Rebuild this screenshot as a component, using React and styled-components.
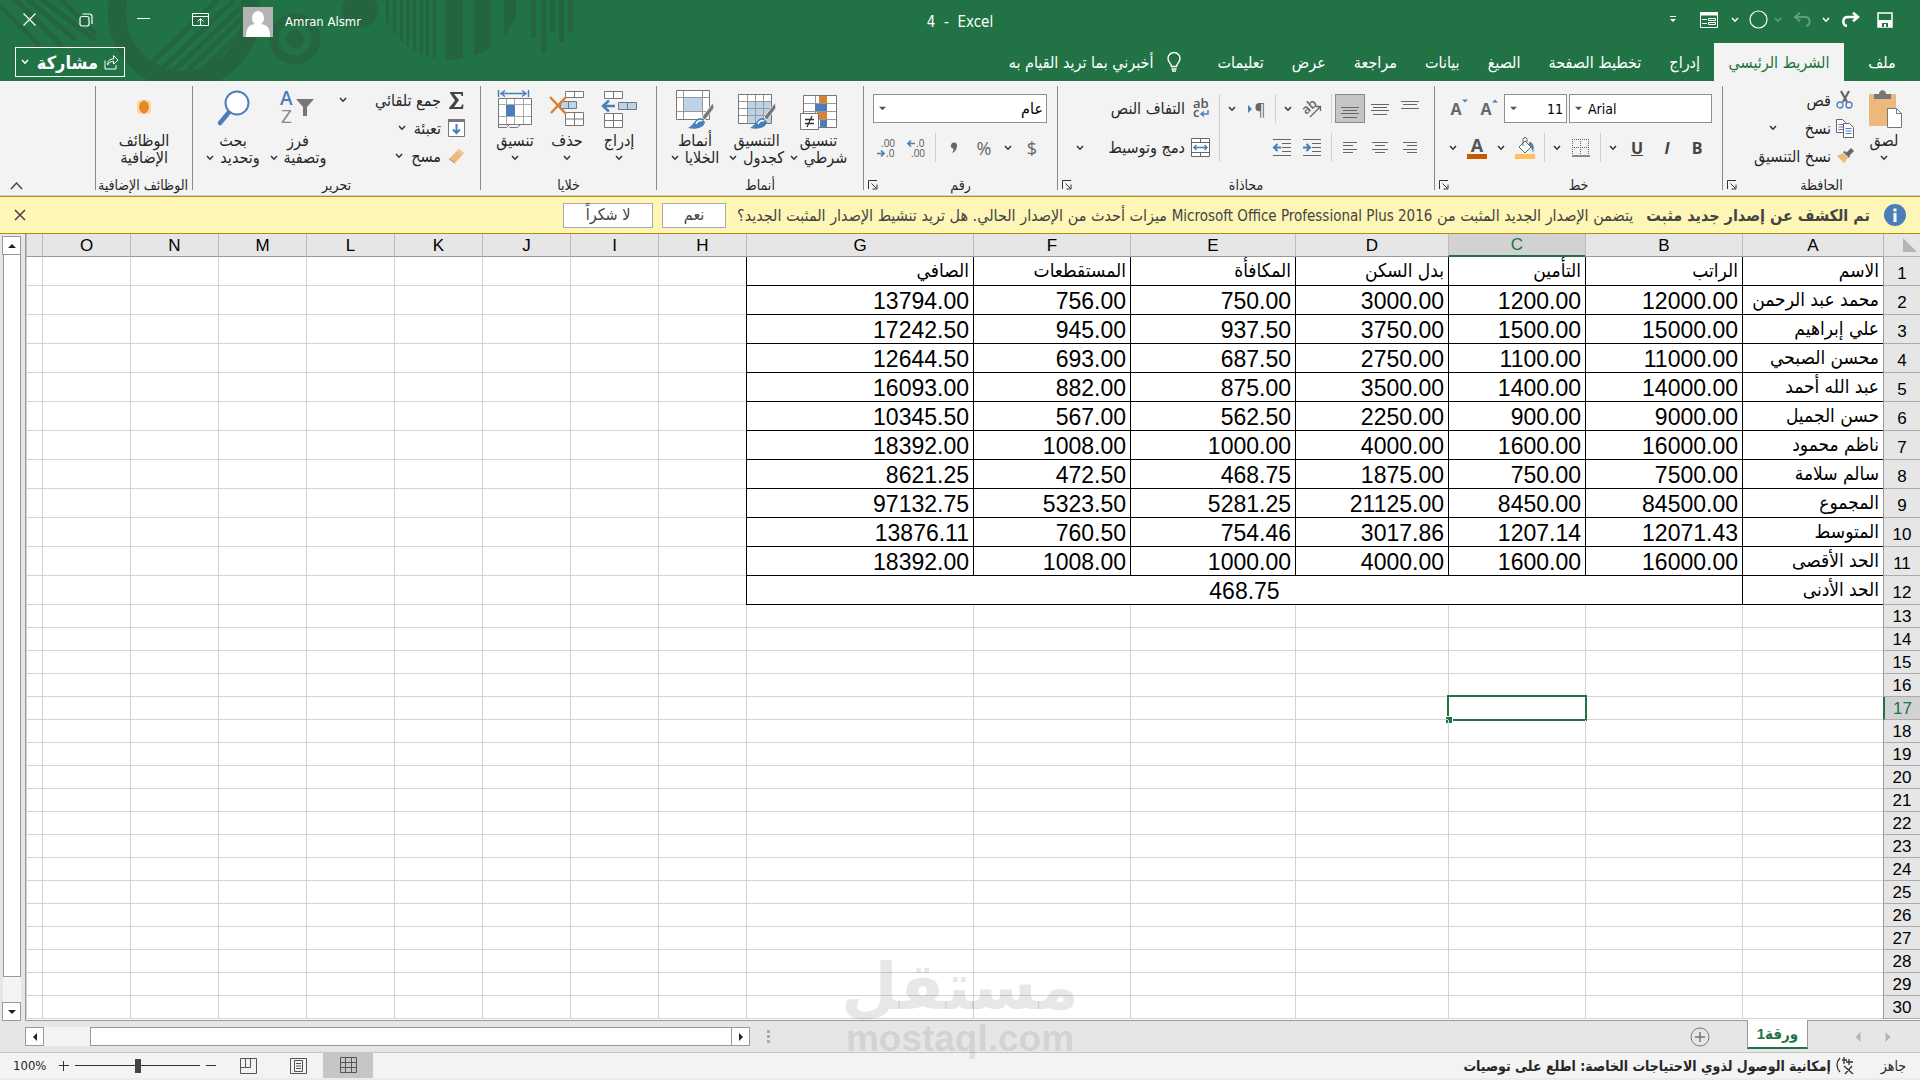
import React from "react";
import styled, { createGlobalStyle } from "styled-components";

const UI = `"DejaVu Sans Condensed", "DejaVu Sans", sans-serif`;
const GREEN = "#217346";

const Global = createGlobalStyle`
  * { box-sizing: border-box; }
  body { margin: 0; background: #e6e6e6; font-family: ${UI}; font-size: 16px; color: #262626; overflow: hidden; }
  button, select, input { font: inherit; color: inherit; margin: 0; }
  svg { display: block; flex: none; overflow: visible; direction: ltr; }
`;

const Window = styled.div`
  height: 100vh;
  display: flex;
  flex-direction: column;
  position: relative;
  overflow: hidden;
`;

/* ---------- Title bar and tabs ---------- */
const Header = styled.header`
  background: ${GREEN};
  color: #fff;
  position: relative;
`;
const Pattern = styled.svg`
  position: absolute;
  left: 0;
  top: 0;
  && { overflow: hidden; }
`;
const TitleBar = styled.div`
  height: 43px;
  display: grid;
  grid-template-columns: 1fr auto 1fr;
  align-items: center;
  position: relative;
`;
const QuickAccess = styled.div`
  display: flex;
  align-items: center;
  padding-right: 20px;
  padding-bottom: 4px;
`;
const WindowControls = styled.div`
  display: flex;
  justify-content: flex-end;
  align-items: center;
`;
const Plain = styled.button`
  border: 0;
  padding: 0;
  background: transparent;
  display: flex;
  align-items: center;
  justify-content: center;
  width: ${(p) => p.$w || 30}px;
  height: ${(p) => p.$h || 30}px;
  opacity: ${(p) => (p.$dim ? 0.3 : 1)};
`;
const ControlButton = styled(Plain)`
  padding-bottom: 4px;
`;
const DocName = styled.div`
  font-size: 15px;
  line-height: 20px;
  white-space: pre;
`;
const Account = styled.button`
  border: 0;
  padding: 0;
  background: transparent;
  display: flex;
  align-items: center;
  gap: 12px;
  font-size: 13px;
  margin-left: 15px;
  direction: ltr;
`;
const TabRow = styled.nav`
  display: flex;
  height: 38px;
  position: relative;
`;
const Tab = styled.button`
  border: 0;
  padding: 0 14px;
  background: ${(p) => (p.$active ? "#f3f3f3" : "transparent")};
  color: ${(p) => (p.$active ? GREEN : "#fff")};
  white-space: nowrap;
  min-width: ${(p) => (p.$active ? 130 : p.$wide ? 76 : 0)}px;
`;
const TellMe = styled.button`
  border: 0;
  padding: 0;
  margin-right: 22px;
  background: transparent;
  display: flex;
  align-items: center;
  gap: 14px;
`;
const Share = styled.button`
  margin: 4px auto 4px 15px;
  width: 110px;
  height: 30px;
  border: 1px solid #fff;
  background: transparent;
  display: flex;
  align-items: center;
  padding: 0 5px;
  font-size: 18px;
  font-weight: bold;
  gap: 6px;
  & > :last-child { margin-right: auto; }
`;

/* ---------- Ribbon ---------- */
const Ribbon = styled.section`
  background: #f3f3f3;
  border-bottom: 1px solid #d2d2d2;
  padding: 5px 0 1px;
  display: flex;
`;
const Group = styled.div`
  width: ${(p) => p.$w}px;
  flex: none;
  background: linear-gradient(#8a8a8a, #8a8a8a) left top / 1px 104px no-repeat;
  padding-left: 1px;
  display: flex;
  flex-direction: column;
  justify-content: space-between;
  min-height: 108px;
`;
const GroupBody = styled.div`
  display: flex;
  padding-right: ${(p) => p.$pr || 0}px;
  padding-top: ${(p) => p.$pt || 0}px;
  justify-content: ${(p) => (p.$center ? "center" : "flex-start")};
`;
const GroupFoot = styled.div`
  display: grid;
  grid-template-columns: 10px 1fr 10px;
  align-items: center;
  font-size: 14px;
  line-height: 18px;
  height: 18px;
  text-align: center;
  white-space: nowrap;
  margin: 0 4px;
`;
const FootLabel = styled.span`
  grid-column: ${(p) => (p.$full ? "1 / 4" : "2")};
`;
const Stack = styled.div`
  display: flex;
  flex-direction: column;
  gap: ${(p) => p.$gap || 0}px;
`;
const ToolRow = styled.div`
  display: flex;
  align-items: center;
  height: 29px;
`;
const Tool = styled.button`
  border: ${(p) => (p.$on ? "1px solid #8a8a8a" : "0")};
  background: ${(p) => (p.$on ? "#c5c5c5" : "transparent")};
  padding: 0;
  width: ${(p) => p.$w || 30}px;
  height: 29px;
  display: flex;
  align-items: center;
  justify-content: center;
  font-family: "Open Sans", sans-serif;
  font-size: ${(p) => p.$size || 16}px;
  font-weight: ${(p) => (p.$bold ? 700 : 400)};
  font-style: ${(p) => (p.$italic ? "italic" : "normal")};
  text-decoration: ${(p) => (p.$underline ? "underline" : "none")};
  color: ${(p) => p.$color || "#444"};
`;
const SizeTool = styled(Tool)`
  direction: ltr;
  & > svg { align-self: flex-start; margin-top: 4px; }
`;
const Rule = styled.span`
  width: 8px;
  align-self: stretch;
  display: flex;
  justify-content: center;
  &::before { content: ""; width: 1px; background: #d0d0d0; }
`;
const Line = styled.button`
  border: 0;
  background: transparent;
  padding: 0;
  display: flex;
  align-items: center;
  gap: ${(p) => p.$gap ?? 4}px;
  height: ${(p) => p.$h || 28}px;
  white-space: nowrap;
`;
const IconSlot = styled.span`
  width: ${(p) => p.$w || 20}px;
  display: flex;
  justify-content: center;
`;
const Arrow = styled.span`
  padding-right: ${(p) => p.$pr || 4}px;
`;
const Big = styled.button`
  border: 0;
  background: transparent;
  padding: 4px 0 0;
  width: ${(p) => p.$w || 62}px;
  display: flex;
  flex-direction: column;
  align-items: center;
  line-height: 17px;
  white-space: nowrap;
`;
const BigIcon = styled.span`
  height: 42px;
  display: flex;
  align-items: flex-start;
  justify-content: center;
`;
const BigLine = styled.span`
  display: flex;
  align-items: center;
  gap: 6px;
  height: 17px;
`;
const ComboBox = styled.div`
  direction: ltr;
  width: ${(p) => p.$w}px;
  height: 29px;
  margin-left: ${(p) => p.$ml || 0}px;
  border: 1px solid #8f8f8f;
  background: #fff;
  display: flex;
  align-items: center;
  padding: 0 3px 0 5px;
  gap: 6px;
`;
const ComboSelect = styled.select`
  appearance: none;
  border: 0;
  background: transparent;
  flex: 1;
  min-width: 0;
  padding: 0;
  font-size: ${(p) => (p.$arabic ? 16 : 14)}px;
  color: #000;
  text-align: ${(p) => p.$align};
  text-align-last: ${(p) => p.$align};
`;
const Collapse = styled.div`
  flex: 1;
  display: flex;
  align-items: flex-end;
  justify-content: flex-end;
  padding: 0 0 2px 7px;
`;

/* ---------- Message bar ---------- */
const MessageBar = styled.div`
  background: #fdf6b6;
  border-top: 1px solid #b98c0a;
  border-bottom: 1px solid #b98c0a;
  height: 38px;
  display: flex;
  align-items: center;
  padding: 0 14px 0 10px;
  color: #444;
  white-space: nowrap;
`;
const MessageTitle = styled.strong`
  margin: 0 14px 0 13px;
`;
const MessageText = styled.span`
  margin-left: 11px;
`;
const Latin = styled.bdi`
  font-size: 15px;
`;
const MessageButton = styled.button`
  width: ${(p) => p.$w}px;
  height: 25px;
  margin-left: 9px;
  padding: 0;
  border: 1px solid #ababab;
  background: #fff;
  line-height: 20px;
`;
const MessageClose = styled(Plain)`
  margin-right: auto;
`;

/* ---------- Sheet ---------- */
const SheetArea = styled.main`
  flex: 1;
  min-height: 0;
  display: flex;
`;
const Grid = styled.div`
  flex: 1;
  min-width: 0;
  overflow: hidden;
  background: #fff;
  border-left: 1px solid #999;
  border-bottom: 1px solid #999;
`;
const Table = styled.table`
  width: 100%;
  table-layout: fixed;
  border-collapse: separate;
  border-spacing: 0;
  font-family: "Liberation Sans", "DejaVu Sans Condensed", sans-serif;
  color: #000;
`;
const Corner = styled.th`
  background: #e6e6e6;
  border-left: 1px solid #b5b5b5;
  border-bottom: 1px solid #b5b5b5;
  padding: 0 3px;
`;
const ColHead = styled.th`
  height: 23px;
  padding: ${(p) => (p.$on ? 1 : 2)}px 0 0;
  font-size: 17px;
  line-height: 20px;
  font-weight: 400;
  background: ${(p) => (p.$on ? "#d2d2d2" : "#e6e6e6")};
  color: ${(p) => (p.$on ? GREEN : "#000")};
  border-left: 1px solid #bdbdbd;
  border-bottom: ${(p) => (p.$on ? `2px solid ${GREEN}` : "1px solid #999")};
`;
const RowHead = styled.th`
  padding: ${(p) => (p.$tall ? 6 : 2)}px 0 0;
  font-size: 17px;
  line-height: 20px;
  font-weight: 400;
  background: ${(p) => (p.$on ? "#d2d2d2" : "#e6e6e6")};
  color: ${(p) => (p.$on ? GREEN : "#000")};
  border-left: ${(p) => (p.$on ? `2px solid ${GREEN}` : "1px solid #999")};
  border-bottom: 1px solid #ababab;
`;
const Cell = styled.td`
  height: ${(p) => (p.$tall ? 29 : 23)}px;
  padding: ${(p) => (p.$tall && !p.$text ? 2 : 0)}px 4px 0;
  font-size: ${(p) => (p.$text ? 19 : 23)}px;
  line-height: ${(p) => (p.$tall ? 26 : 20)}px;
  white-space: nowrap;
  text-align: ${(p) => (p.$center ? "center" : "right")};
  border-left: 1px solid ${(p) => (p.$ink ? "#000" : "#d4d4d4")};
  border-bottom: 1px solid ${(p) => (p.$ink ? "#000" : "#d4d4d4")};
  position: relative;
`;
const Cursor = styled.span`
  position: absolute;
  inset: -2px;
  border: 2px solid ${GREEN};
  &::after {
    content: "";
    position: absolute;
    left: -3px;
    bottom: -4px;
    width: 6px;
    height: 6px;
    background: ${GREEN};
    border: 1px solid #fff;
    border-width: 1px 1px 0 0;
  }
`;
const VScroll = styled.div`
  width: 25px;
  padding: 2px 4px 0 3px;
  display: flex;
  flex-direction: column;
`;
const ScrollButton = styled.button`
  width: 19px;
  height: 19px;
  flex: none;
  padding: 0;
  background: #fff;
  border: 1px solid #999;
  display: flex;
  align-items: center;
  justify-content: center;
`;
const VTrack = styled.div`
  flex: 1;
  background: #f3f3f3;
  padding-bottom: 25px;
  display: flex;
`;
const VThumb = styled.div`
  flex: 1;
  background: #fff;
  border: 1px solid #999;
  border-top: 0;
`;

/* ---------- Sheet tabs ---------- */
const SheetBar = styled.div`
  height: 32px;
  border-bottom: 1px solid #c6c6c6;
  display: flex;
  align-items: center;
  padding: 0 17px 0 25px;
`;
const SheetTab = styled.button`
  align-self: flex-start;
  width: 61px;
  height: 29px;
  margin: -1px 35px 0 37px;
  padding: 0;
  background: #fff;
  border: 1px solid #999;
  border-top: 0;
  border-bottom: 2px solid ${GREEN};
  color: ${GREEN};
  font-family: "Liberation Sans", "DejaVu Sans Condensed", sans-serif;
  font-weight: bold;
  font-size: 15px;
  position: relative;
`;
const HScroll = styled.div`
  margin-right: auto;
  width: 40%;
  min-width: 300px;
  padding-right: 6px;
  display: flex;
`;
const HTrack = styled.div`
  flex: 1;
  background: #f3f3f3;
  padding-left: 46px;
  display: flex;
`;
const HThumb = styled.div`
  flex: 1;
  background: #fff;
  border: 1px solid #999;
  border-right: 0;
`;
const Dots = styled.span`
  display: grid;
  gap: 2px;
  align-content: center;
  margin-left: 17px;
  & i { width: 3px; height: 3px; background: #ababab; }
`;

/* ---------- Status bar ---------- */
const Status = styled.footer`
  height: 27px;
  background: #f3f3f3;
  border-bottom: 2px solid #ebebeb;
  display: flex;
  align-items: center;
  padding: 0 14px 0 13px;
  font-size: 14px;
  white-space: nowrap;
`;
const Access = styled.button`
  border: 0;
  background: transparent;
  padding: 0;
  margin-right: 26px;
  display: flex;
  align-items: center;
  gap: 5px;
  font-weight: bold;
`;
const View = styled.button`
  border: 0;
  padding: 0;
  align-self: stretch;
  width: 50px;
  background: ${(p) => (p.$on ? "#c6c6c6" : "transparent")};
  display: flex;
  align-items: center;
  justify-content: center;
`;
const Views = styled.div`
  margin: 0 auto 0 4px;
  align-self: stretch;
  display: flex;
`;
const Zoom = styled.input`
  appearance: none;
  width: 125px;
  height: 20px;
  && { margin: 0 3px; }
  background: linear-gradient(#333, #333) center / 100% 1px no-repeat;
  &::-webkit-slider-thumb { appearance: none; width: 6px; height: 14px; background: #444; }
`;
const Percent = styled.span`
  width: 43px;
  font-size: 13px;
  text-align: left;
  direction: ltr;
`;

const Watermark = styled.div`
  position: absolute;
  left: 0;
  right: 0;
  bottom: 19px;
  text-align: center;
  pointer-events: none;
  color: rgba(80, 85, 80, 0.14);
  font-family: "DejaVu Sans", sans-serif;
  font-weight: bold;
`;
const MarkName = styled.div`
  font-size: 65px;
  line-height: 60px;
`;
const MarkSite = styled.div`
  font-family: "Liberation Sans", sans-serif;
  font-size: 37px;
  line-height: 44px;
  direction: ltr;
`;

/* ---------- Icons ---------- */
const Chev = ({ c = "#333" }) => (
  <svg width="8" height="6" viewBox="0 0 8 6" fill="none" stroke={c} strokeWidth="1.5">
    <path d="M1 1l3 3.2L7 1" />
  </svg>
);
const Tri = ({ d = "down", c = "#222", s = 8 }) => {
  const p = { down: "M0 2h8L4 6z", up: "M0 6h8L4 2z", left: "M6 0v8L2 4z", right: "M2 0v8l4-4z" }[d];
  return <svg width={s} height={s} viewBox="0 0 8 8"><path d={p} fill={c} /></svg>;
};
const Launcher = () => (
  <svg width="10" height="10" viewBox="0 0 10 10" fill="none" stroke="#333">
    <path d="M.5 9V.5H9M3.5 3.5l5 5M9 4.5V9H4.5" />
  </svg>
);
const Lines = ({ rows, w = 20, h = 20 }) => (
  <svg width={w} height={h} viewBox={`0 0 ${w} ${h}`} stroke="#666">
    {rows.map(([x1, x2, y], i) => <path key={i} d={`M${x1} ${y + 0.5}H${x2}`} />)}
  </svg>
);
const Brush = () => (
  <g>
    <path d="M38 13 27 27l3 3 9-12z" fill="#777" stroke="#f3f3f3" strokeWidth=".8" />
    <path d="M26 28c-6 0-6 6-13 10 8 2 16 0 17-6z" fill="#4a7ebb" />
    <path d="M21 34c1-3 4-4 6-3" stroke="#fff" strokeWidth="1.5" fill="none" />
  </g>
);

const Deco = () => (
  <Pattern width="600" height="81" viewBox="0 0 600 81" fill="#24643f" stroke="none">
    <defs>
      <clipPath id="ball"><circle cx="450" cy="-12" r="72" /></clipPath>
      <clipPath id="ring"><circle cx="184" cy="13" r="60" /></clipPath>
    </defs>
    <g stroke="#24643f" strokeWidth="5">
      <path d="M-4 2 40 46M12-4 62 46M24-4 76 40M38-4 95 40M52-10 96 34" />
    </g>
    <circle cx="184" cy="13" r="67" fill="none" stroke="#24643f" strokeWidth="18" />
    <g stroke="#24643f" strokeWidth="5" clipPath="url(#ring)">
      <path d="M140 74 226-8M150 80 234 0M160 84 240 8M172 86 244 16M184 88 248 26" />
    </g>
    <circle cx="295" cy="39" r="21" fill="none" stroke="#24643f" strokeWidth="9" />
    <circle cx="295" cy="39" r="9" />
    <circle cx="360" cy="10" r="18" />
    <g clipPath="url(#ball)">
      <path d="M386 0h3v81h-3zM393 0h3v81h-3zM400 0h3v81h-3zM406 0h3v81h-3zM413 0h3v81h-3zM420 0h3v81h-3zM426 0h3v81h-3zM433 0h3v81h-3zM446 0h17v81h-17zM474 0h17v81h-17zM504 0h12v81h-12z" />
    </g>
    <path d="M531 0h5v38h-5zM541 0h5v53h-5zM550 0h5v32h-5zM559 0h5v42h-5zM568 0h5v32h-5z" />
  </Pattern>
);

const Combo = ({ label, w, ml, align, value, arabic }) => (
  <ComboBox $w={w} $ml={ml}>
    <Tri c="#555" s={7} />
    <ComboSelect aria-label={label} $align={align} $arabic={arabic} defaultValue={value}>
      <option>{value}</option>
    </ComboSelect>
  </ComboBox>
);
const Drop = ({ label }) => <Tool $w={18} aria-label={label}><Chev /></Tool>;
const Foot = ({ children, launch, full }) => (
  <GroupFoot>
    <FootLabel $full={full}>{children}</FootLabel>
    {launch && <Plain $w={10} $h={10} aria-label="خيارات"><Launcher /></Plain>}
  </GroupFoot>
);

/* ---------- Data ---------- */
const columns = [["A", 141], ["B", 157], ["C", 137], ["D", 153], ["E", 165], ["F", 157], ["G", 227],
  ["H", 88], ["I", 88], ["J", 88], ["K", 88], ["L", 88], ["M", 88], ["N", 88], ["O", 88]];
const rows = [
  ["الاسم", "الراتب", "التأمين", "بدل السكن", "المكافأة", "المستقطعات", "الصافي"],
  ["محمد عبد الرحمن", "12000.00", "1200.00", "3000.00", "750.00", "756.00", "13794.00"],
  ["علي إبراهيم", "15000.00", "1500.00", "3750.00", "937.50", "945.00", "17242.50"],
  ["محسن الصبحي", "11000.00", "1100.00", "2750.00", "687.50", "693.00", "12644.50"],
  ["عبد الله أحمد", "14000.00", "1400.00", "3500.00", "875.00", "882.00", "16093.00"],
  ["حسن الجميل", "9000.00", "900.00", "2250.00", "562.50", "567.00", "10345.50"],
  ["ناظم محمود", "16000.00", "1600.00", "4000.00", "1000.00", "1008.00", "18392.00"],
  ["سالم سلامة", "7500.00", "750.00", "1875.00", "468.75", "472.50", "8621.25"],
  ["المجموع", "84500.00", "8450.00", "21125.00", "5281.25", "5323.50", "97132.75"],
  ["المتوسط", "12071.43", "1207.14", "3017.86", "754.46", "760.50", "13876.11"],
  ["الحد الأقصى", "16000.00", "1600.00", "4000.00", "1000.00", "1008.00", "18392.00"],
];
const blanks = (from, count, tall) =>
  Array.from({ length: count }, (_, i) => <Cell key={from + i} $tall={tall} />);

const Sheet = () => (
  <Table>
    <colgroup>
      <col style={{ width: 37 }} />
      {columns.map(([n, w]) => <col key={n} style={{ width: w }} />)}
      <col />
    </colgroup>
    <thead>
      <tr>
        <Corner aria-label="تحديد الكل">
          <svg width="14" height="14" viewBox="0 0 14 14"><path d="M0 0v14h14z" fill="#b4b4b4" /></svg>
        </Corner>
        {columns.map(([n]) => <ColHead key={n} $on={n === "C"}>{n}</ColHead>)}
        <ColHead aria-label="P" />
      </tr>
    </thead>
    <tbody>
      {rows.map((r, i) => (
        <tr key={i}>
          <RowHead $tall>{i + 1}</RowHead>
          {r.map((v, j) => <Cell key={j} $tall $ink $text={i === 0 || j === 0}>{v}</Cell>)}
          {blanks(7, 9, true)}
        </tr>
      ))}
      <tr>
        <RowHead $tall>12</RowHead>
        <Cell $tall $ink $text>الحد الأدنى</Cell>
        <Cell $tall $ink $center colSpan={6}>468.75</Cell>
        {blanks(7, 9, true)}
      </tr>
      {Array.from({ length: 18 }, (_, i) => i + 13).map((n) => (
        <tr key={n}>
          <RowHead $on={n === 17}>{n}</RowHead>
          {blanks(0, 2)}
          <Cell>{n === 17 && <Cursor />}</Cell>
          {blanks(3, 13)}
        </tr>
      ))}
    </tbody>
  </Table>
);

const Clipboard = () => (
  <Group $w={198}>
    <GroupBody $pr={11}>
      <Big $w={50}>
        <BigIcon>
          <svg width="36" height="38" viewBox="0 0 36 38">
            <path d="M3 4h27v32H3z" fill="#ecb97a" />
            <path d="M8 9V4h5c0-5 7-5 7 0h5v5z" fill="#777" />
            <path d="M21.500 18.500h9l5 5v14h-14z" fill="#fff" stroke="#777" />
            <path d="M30.500 18.500v5h5" fill="none" stroke="#777" />
          </svg>
        </BigIcon>
        <BigLine>لصق</BigLine>
        <BigLine><Chev /></BigLine>
      </Big>
      <Stack>
        <Line $gap={0}>
          <IconSlot $w={28}>
            <svg width="18" height="18" viewBox="0 0 18 18" fill="none">
              <path d="M5 0l6 11M13 0L7 11" stroke="#666" strokeWidth="2.200" />
              <circle cx="4" cy="14" r="3" stroke="#4a7ebb" strokeWidth="1.300" />
              <circle cx="13" cy="14" r="3" stroke="#4a7ebb" strokeWidth="1.300" />
            </svg>
          </IconSlot>
          قص
        </Line>
        <Line $gap={0}>
          <IconSlot $w={28}>
            <svg width="18" height="19" viewBox="0 0 18 19" fill="#fff" stroke="#666">
              <path d="M.5.5h6l3 3v10h-9z" /><path d="M2.500 5.500h5M2.500 8h5M2.500 10.500h5" stroke="#4a7ebb" />
              <path d="M7.500 4.500h6l4 4v10h-10z" /><path d="M9.500 9.500h6M9.500 12h6M9.500 14.500h6" stroke="#4a7ebb" />
            </svg>
          </IconSlot>
          نسخ
          <Arrow $pr={28}><Chev /></Arrow>
        </Line>
        <Line $gap={0}>
          <IconSlot $w={28}>
            <svg width="17" height="16" viewBox="0 0 17 16">
              <path d="M0 8l6-3 5 5-4 5z" fill="#ecb97a" />
              <path d="M6 4l2-1 5 5-1 2z" fill="#666" />
              <path d="M9 5l5-5 3 3-5 5z" fill="#666" />
            </svg>
          </IconSlot>
          نسخ التنسيق
        </Line>
      </Stack>
    </GroupBody>
    <Foot launch>الحافظة</Foot>
  </Group>
);

const FontGroup = () => (
  <Group $w={288}>
    <GroupBody $pr={10} $pt={8}>
      <Stack $gap={10}>
        <ToolRow>
          <Combo label="الخط" w={143} ml={2} align="left" value="Arial" />
          <Combo label="حجم الخط" w={63} align="right" value="11" />
          <SizeTool $bold $color="#666">A<Tri d="up" c="#4a7ebb" s={6} /></SizeTool>
          <SizeTool $bold $color="#666">A<Tri c="#4a7ebb" s={6} /></SizeTool>
        </ToolRow>
        <ToolRow>
          <Tool $bold>B</Tool>
          <Tool $bold $italic>I</Tool>
          <Tool $bold $underline>U</Tool>
          <Drop label="تسطير" />
          <Rule />
          <Tool aria-label="حدود">
            <svg width="18" height="18" viewBox="0 0 18 18" fill="none" stroke="#666">
              <path d="M.5 0v16M8.500 0v16M16.500 0v16M0 .5h17M0 8.500h17" strokeDasharray="1 1" />
              <path d="M0 17h18" strokeWidth="1.500" />
            </svg>
          </Tool>
          <Drop label="حدود" />
          <Rule />
          <Tool aria-label="لون التعبئة">
            <svg width="20" height="22" viewBox="0 0 20 22">
              <path d="M0 17h20v5H0z" fill="#ffbf60" />
              <path d="M4 10l6-6 6 6-6 6z" fill="#fff" stroke="#666" />
              <path d="M8 9V2.500a2 2 0 0 1 4 0V5" fill="none" stroke="#666" />
              <path d="M14 5c4 0 6 4 4 11-1-4-2-7-4-8z" fill="#4a7ebb" />
            </svg>
          </Tool>
          <Drop label="لون التعبئة" />
          <Tool aria-label="لون الخط">
            <svg width="20" height="22" viewBox="0 0 20 22">
              <path d="M0 17h20v5H0z" fill="#c55a00" />
              <text x="10" y="15" textAnchor="middle" fontFamily="Open Sans" fontWeight="700" fontSize="18" fill="#555">A</text>
            </svg>
          </Tool>
          <Drop label="لون الخط" />
        </ToolRow>
      </Stack>
    </GroupBody>
    <Foot launch>خط</Foot>
  </Group>
);

const Indent = ({ flip }) => (
  <svg width="18" height="18" viewBox="0 0 18 18" stroke="#666" fill="none">
    <path d="M0 .5h18M9 4.500h9M9 8.500h9M9 12.500h9M0 16.500h18" />
    <path d={flip ? "M8 8.500H1M4.500 5 1 8.500 4.500 12" : "M0 8.500h7M3.500 5 7 8.500 3.500 12"} stroke="#4a7ebb" strokeWidth="2" />
  </svg>
);

const Alignment = () => (
  <Group $w={377}>
    <GroupBody $pr={9} $pt={8}>
      <Stack $gap={10}>
        <ToolRow>
          <Tool aria-label="محاذاة لأعلى"><Lines h={18} rows={[[1, 19, 1], [3, 17, 4], [1, 19, 8]]} /></Tool>
          <Tool aria-label="توسيط عمودي"><Lines h={18} rows={[[1, 19, 4], [3, 17, 7], [1, 19, 10], [3, 17, 14]]} /></Tool>
          <Tool $on aria-label="محاذاة لأسفل"><Lines h={18} rows={[[1, 19, 7], [3, 17, 10], [1, 19, 13], [3, 17, 17]]} /></Tool>
          <Rule />
          <Tool aria-label="الاتجاه">
            <svg width="20" height="18" viewBox="0 0 20 18">
              <text x="0" y="12" transform="rotate(-40 6 8)" fontFamily="Open Sans" fontWeight="600" fontSize="13" fill="#666">ab</text>
              <path d="M8 17 18 7M14 6.500h4.500V11" fill="none" stroke="#666" strokeWidth="1.300" />
            </svg>
          </Tool>
          <Drop label="الاتجاه" />
          <Rule />
          <Tool $size={17} $color="#666">¶<Tri d="right" c="#4a7ebb" s={8} /></Tool>
          <Drop label="اتجاه النص" />
        </ToolRow>
        <ToolRow>
          <Tool aria-label="محاذاة لليمين"><Lines h={14} rows={[[3, 17, 1], [7, 17, 4], [3, 17, 8], [7, 17, 11]]} /></Tool>
          <Tool aria-label="توسيط"><Lines h={14} rows={[[2, 18, 1], [5, 15, 4], [2, 18, 8], [5, 15, 11]]} /></Tool>
          <Tool aria-label="محاذاة لليسار"><Lines h={14} rows={[[3, 17, 1], [3, 13, 4], [3, 17, 8], [3, 13, 11]]} /></Tool>
          <Rule />
          <Tool aria-label="إنقاص المسافة البادئة"><Indent /></Tool>
          <Tool aria-label="زيادة المسافة البادئة"><Indent flip /></Tool>
        </ToolRow>
      </Stack>
      <Rule />
      <Stack $gap={10}>
        <Line $h={29} $gap={1}>
          <IconSlot $w={29}>
            <svg width="18" height="20" viewBox="0 0 18 20" fontFamily="Open Sans" fontWeight="600" fontSize="13" fill="#555">
              <text x="1" y="9">ab</text><text x="1" y="18">c</text>
              <path d="M16 11v4h-6M12 12.500l-3 2.500 3 2.500" fill="none" stroke="#4a7ebb" strokeWidth="1.500" />
            </svg>
          </IconSlot>
          التفاف النص
        </Line>
        <Line $h={29} $gap={1}>
          <IconSlot $w={29}>
            <svg width="19" height="19" viewBox="0 0 19 19" fill="#fff" stroke="#666">
              <path d="M.5.5h18v18H.5zM.5 4.500h18M.5 14.500h18M9.500.5v4M9.500 14.500v4" />
              <path d="M3 9.500h13M5.500 7 3 9.500 5.500 12M13.500 7l2.500 2.500-2.500 2.500" stroke="#4a7ebb" strokeWidth="1.500" fill="none" />
            </svg>
          </IconSlot>
          دمج وتوسيط
          <Arrow $pr={24}><Chev /></Arrow>
        </Line>
      </Stack>
    </GroupBody>
    <Foot launch>محاذاة</Foot>
  </Group>
);

const Decimal = ({ more }) => (
  <svg width="18" height="20" viewBox="0 0 18 20" fontFamily="Open Sans" fontSize="10" fill="#555">
    <text x={more ? 9 : 4} y="9">{more ? ".0" : ".00"}</text>
    <text x={more ? 4 : 9} y="19">{more ? ".00" : ".0"}</text>
    <path d={more ? "M8 5.500H1M4 2.500l-3 3 3 3" : "M0 15.500h7M4 12.500l3 3-3 3"} stroke="#4a7ebb" strokeWidth="1.700" fill="none" />
  </svg>
);

const NumberGroup = () => (
  <Group $w={194}>
    <GroupBody $pr={10} $pt={8}>
      <Stack $gap={10}>
        <Combo label="تنسيق الأرقام" w={174} align="right" value="عام" arabic />
        <ToolRow>
          <Tool $size={18} $color="#666">$</Tool>
          <Drop label="عملة" />
          <Tool $size={18} $color="#666">%</Tool>
          <Tool aria-label="نمط الفاصلة">
            <svg width="6" height="10" viewBox="0 0 6 10"><path d="M0 2a3 3 0 0 1 6 1c0 3-2 6-5 7 1-2 2-3 1-4.500A3 3 0 0 1 0 2z" fill="#666" /></svg>
          </Tool>
          <Rule />
          <Tool aria-label="زيادة المنازل العشرية"><Decimal more /></Tool>
          <Tool aria-label="إنقاص المنازل العشرية"><Decimal /></Tool>
        </ToolRow>
      </Stack>
    </GroupBody>
    <Foot launch>رقم</Foot>
  </Group>
);

const Styles = () => (
  <Group $w={207}>
    <GroupBody $pr={14}>
      <Big $w={61}>
        <BigIcon>
          <svg width="38" height="40" viewBox="0 0 38 40">
            <path d="M3.500 5.500h33v32h-33z" fill="#fff" stroke="#777" />
            <path d="M4 13.500h32M4 21.500h32M4 29.500h32M15.500 6v31M26.500 6v31" stroke="#999" fill="none" />
            <path d="M19 6h8v7h-8zM17 22h10v7H17z" fill="#d98032" /><path d="M15 14h12v7H15zM20 30h7v7h-7z" fill="#4a7ebb" />
            <path d="M.5 23.500h18v16H.5z" fill="#fff" stroke="#777" />
            <path d="M5 29.500h9M5 33.500h9M12 26l-5 11" stroke="#333" strokeWidth="1.300" />
          </svg>
        </BigIcon>
        <BigLine>تنسيق</BigLine>
        <BigLine>شرطي<Chev /></BigLine>
      </Big>
      <Big $w={63}>
        <BigIcon>
          <svg width="40" height="40" viewBox="0 0 40 40">
            <path d="M1.500 4.500h33v29h-33z" fill="#fff" stroke="#777" />
            <path d="M10 12h24v21H10z" fill="#bdd3e8" />
            <path d="M2 11.500h32M2 18.500h32M2 25.500h32M10.500 5v28M18.500 5v28M26.500 5v28" stroke="#999" fill="none" />
            <Brush />
          </svg>
        </BigIcon>
        <BigLine>التنسيق</BigLine>
        <BigLine>كجدول<Chev /></BigLine>
      </Big>
      <Big $w={60}>
        <BigIcon>
          <svg width="40" height="40" viewBox="0 0 40 40">
            <path d="M1.500.5h33v29h-33z" fill="#fff" stroke="#777" />
            <path d="M8.500 1v28M27.500 1v28M2 7.500h32M2 21.500h32" stroke="#999" fill="none" />
            <path d="M9 8h18v13H9z" fill="#bdd3e8" />
            <Brush />
          </svg>
        </BigIcon>
        <BigLine>أنماط</BigLine>
        <BigLine>الخلايا<Chev /></BigLine>
      </Big>
    </GroupBody>
    <Foot>أنماط</Foot>
  </Group>
);

const Cells = () => (
  <Group $w={176}>
    <GroupBody $pr={11}>
      <Big $w={52}>
        <BigIcon>
          <svg width="36" height="40" viewBox="0 0 36 40" fill="#fff" stroke="#777">
            <path d="M3.500 1.500h18v7h-18zM12.500 1.500v7M3.500 23.500h18v14h-18zM12.500 23.500v14M3.500 30.500h18" />
            <path d="M17.500 12.500h18v7h-18zM26.500 12.500v7" fill="#bdd3e8" />
            <path d="M14 16H2M8 10.500 2 16l6 5.500" fill="none" stroke="#4a7ebb" strokeWidth="2.500" />
          </svg>
        </BigIcon>
        <BigLine>إدراج</BigLine>
        <BigLine><Chev /></BigLine>
      </Big>
      <Big $w={52}>
        <BigIcon>
          <svg width="36" height="40" viewBox="0 0 36 40" fill="#fff" stroke="#777">
            <path d="M16.500 1.500h18v6h-18zM25.500 1.500v6M16.500 22.500h18v13h-18zM25.500 22.500v13M16.500 29h18" />
            <path d="M11.500 11.500h16v7h-16zM19.500 11.500v7" fill="#bdd3e8" />
            <path d="M1 7l16 17M17 7 2 23" fill="none" stroke="#d98032" strokeWidth="2.500" />
          </svg>
        </BigIcon>
        <BigLine>حذف</BigLine>
        <BigLine><Chev /></BigLine>
      </Big>
      <Big $w={52}>
        <BigIcon>
          <svg width="36" height="40" viewBox="0 0 36 40" fill="#fff" stroke="#777">
            <path d="M1.500 8.500h33v26h-33z" />
            <path d="M2 14.500h32M2 26.500h32M9.500 9v25M17.500 9v25M26.500 9v25" stroke="#aaa" />
            <path d="M9 15h9v11H9z" fill="#4a7ebb" stroke="none" />
            <path d="M1.500 34v3.500h8l3-3M12.500 37.500h8l3-3" fill="none" />
            <path d="M4 3.500h25M8 .5l-4 3 4 3M25 .5l4 3-4 3M1.500 0v7M31.500 0v7" fill="none" stroke="#4a7ebb" strokeWidth="1.500" />
          </svg>
        </BigIcon>
        <BigLine>تنسيق</BigLine>
        <BigLine><Chev /></BigLine>
      </Big>
    </GroupBody>
    <Foot>خلايا</Foot>
  </Group>
);

const LinesCol = styled(Stack)`
  width: 136px;
`;
const Editing = () => (
  <Group $w={288}>
    <GroupBody $pr={13}>
      <LinesCol>
        <Line>
          <IconSlot $w={22}>
            <svg width="15" height="17" viewBox="0 0 15 17"><path d="M1 0h13v4h-1.500L12 2H5l5 6-5 7h7l1-2.500h1.500L14 17H0v-1l6-7.500L1 1z" fill="#444" /></svg>
          </IconSlot>
          جمع تلقائي
          <Arrow $pr={24}><Chev /></Arrow>
        </Line>
        <Line>
          <IconSlot $w={22}>
            <svg width="17" height="18" viewBox="0 0 17 18"><path d="M.5.5h16v17H.5z" fill="#fff" stroke="#777" /><path d="M0 0h17v3H0z" fill="#777" /><path d="M8.500 5v9M5 10.500l3.500 3.500 3.500-3.500" stroke="#4a7ebb" strokeWidth="2" fill="none" /></svg>
          </IconSlot>
          تعبئة
          <Arrow><Chev /></Arrow>
        </Line>
        <Line>
          <IconSlot $w={22}>
            <svg width="17" height="17" viewBox="0 0 17 17"><path d="M11 1l5 4-9 10-6-4z" fill="#ecb97a" /><path d="M11 1l5 4-2 2-6-4z" fill="#f0c894" /><path d="M1 11l6 4" stroke="#b98a50" /></svg>
          </IconSlot>
          مسح
          <Arrow><Chev /></Arrow>
        </Line>
      </LinesCol>
      <Big $w={66}>
        <BigIcon>
          <svg width="40" height="36" viewBox="0 0 40 36" fontFamily="Open Sans" fontSize="19">
            <text x="2" y="15" fontWeight="600" fill="#4a7ebb">A</text>
            <text x="3" y="33" fill="#888">Z</text>
            <path d="M18 9h18l-7 8v9h-4v-9z" fill="#777" />
          </svg>
        </BigIcon>
        <BigLine>فرز</BigLine>
        <BigLine>وتصفية<Chev /></BigLine>
      </Big>
      <Big $w={64}>
        <BigIcon>
          <svg width="36" height="36" viewBox="0 0 36 36">
            <path d="M15 21 5 33" stroke="#4a7ebb" strokeWidth="4.500" strokeLinecap="round" />
            <circle cx="22" cy="13" r="11.500" fill="#fff" stroke="#4a7ebb" strokeWidth="2" />
          </svg>
        </BigIcon>
        <BigLine>بحث</BigLine>
        <BigLine>وتحديد<Chev /></BigLine>
      </Big>
    </GroupBody>
    <Foot>تحرير</Foot>
  </Group>
);

const AddIns = () => (
  <Group $w={97}>
    <GroupBody $center>
      <Big $w={80}>
        <BigIcon>
          <svg width="16" height="32" viewBox="0 0 16 32">
            <rect x="1" y="10" width="14" height="14" rx="4" fill="#fbd9a0" />
            <path d="M8 10l4 3 1 4-1 4-4 3-4-3-1-4 1-4z" fill="#df8a2b" />
          </svg>
        </BigIcon>
        <BigLine>الوظائف</BigLine>
        <BigLine>الإضافية</BigLine>
      </Big>
    </GroupBody>
    <Foot full>الوظائف الإضافية</Foot>
  </Group>
);

export default function App() {
  return (
    <Window dir="rtl" lang="ar">
      <Global />
      <Header>
        <Deco />
        <TitleBar>
          <QuickAccess>
            <Plain aria-label="حفظ">
              <svg width="16" height="16" viewBox="0 0 16 16"><path d="M1 1h14v14H1z" fill="none" stroke="#fff" strokeWidth="1.500" /><path d="M1 8h14v7H1z" fill="#fff" /><path d="M5 11h6v4H9v-3H7v3H5z" fill={GREEN} /></svg>
            </Plain>
            <Plain $w={40} aria-label="إعادة">
              <svg width="19" height="16" viewBox="0 0 19 16" fill="none" stroke="#fff" strokeWidth="2.500"><path d="M17 5H7C1 5 1 13 6 14M12 .8 17 5l-5 4.200" /></svg>
            </Plain>
            <Plain $w={8} aria-label="خيارات الإعادة"><Chev c="#fff" /></Plain>
            <Plain $w={40} $dim aria-label="تراجع">
              <svg width="19" height="16" viewBox="0 0 19 16" fill="none" stroke="#fff" strokeWidth="2"><path d="M2 5h10c6 0 6 8 1 9M7 .8 2 5l5 4.200" /></svg>
            </Plain>
            <Plain $w={8} $dim aria-label="خيارات التراجع"><Chev c="#fff" /></Plain>
            <Plain $w={32} aria-label="شكل">
              <svg width="19" height="19" viewBox="0 0 19 19"><circle cx="9.500" cy="9.500" r="8.500" fill="none" stroke="#fff" strokeWidth="1.200" /></svg>
            </Plain>
            <Plain $w={14} aria-label="خيارات الشكل"><Chev c="#fff" /></Plain>
            <Plain $w={38} aria-label="نموذج">
              <svg width="18" height="16" viewBox="0 0 18 16" fill="none" stroke="#fff"><path d="M.5.5h17v15H.5z" /><path d="M0 2h18" strokeWidth="3" /><path d="M2 7.500h5M2 11.500h5M8.500 6.500h7v2h-7zM8.500 10.500h7v2h-7z" /></svg>
            </Plain>
            <Plain $w={34} aria-label="تخصيص">
              <svg width="6" height="7" viewBox="0 0 6 7"><path d="M0 0h6v1H0zM0 3h6L3 6z" fill="#fff" /></svg>
            </Plain>
          </QuickAccess>
          <DocName dir="ltr">4  -  Excel</DocName>
          <WindowControls>
            <Account>
              <svg width="30" height="30" viewBox="0 0 30 30"><path d="M0 0h30v30H0z" fill="#b4b4b4" /><ellipse cx="15" cy="11" rx="6" ry="7" fill="#fff" /><path d="M3 30c0-10 3-12 9-13h6c6 1 9 3 9 13z" fill="#fff" /></svg>
              Amran Alsmr
            </Account>
            <ControlButton $w={56} aria-label="خيارات عرض الشريط">
              <svg width="17" height="13" viewBox="0 0 17 13" fill="none" stroke="#fff"><path d="M.5.5h16v12H.5zM.5 3.500h16M8.500 12V6M5.500 8.500l3-3 3 3" /></svg>
            </ControlButton>
            <ControlButton $w={58} aria-label="تصغير">
              <svg width="13" height="13" viewBox="0 0 13 13" stroke="#fff"><path d="M0 5.500h13" /></svg>
            </ControlButton>
            <ControlButton $w={56} aria-label="استعادة">
              <svg width="14" height="14" viewBox="0 0 14 14" fill="none" stroke="#fff" strokeWidth="1.200"><rect x="1" y="3.500" width="9" height="9.500" rx="2" /><path d="M3.500 1h7a2.500 2.500 0 0 1 2.500 2.500V11" /></svg>
            </ControlButton>
            <ControlButton $w={58} aria-label="إغلاق">
              <svg width="13" height="13" viewBox="0 0 13 13" stroke="#fff" strokeWidth="1.200"><path d="M.5.5l12 12M12.500.5l-12 12" /></svg>
            </ControlButton>
          </WindowControls>
        </TitleBar>
        <TabRow>
          <Tab $wide>ملف</Tab>
          <Tab $active>الشريط الرئيسي</Tab>
          {["إدراج", "تخطيط الصفحة", "الصيغ", "بيانات", "مراجعة", "عرض", "تعليمات"].map((t) => <Tab key={t}>{t}</Tab>)}
          <TellMe>
            <svg width="14" height="20" viewBox="0 0 14 20" fill="none" stroke="#fff" strokeWidth="1.400"><path d="M4.500 14.500c0-3-3.500-4-3.500-8a6 6 0 0 1 12 0c0 4-3.500 5-3.500 8zM4.500 17h5M5 19h4" /></svg>
            أخبرني بما تريد القيام به
          </TellMe>
          <Share>
            <svg width="15" height="16" viewBox="0 0 15 16" fill="none" stroke="#fff"><path d="M1 6.500v8.500h11v-4M3.500 11c0-4 2-6 6-6V1.500L14 6l-4.500 4V7.500c-3 0-5 1-6 3.500z" /></svg>
            مشاركة
            <Chev c="#fff" />
          </Share>
        </TabRow>
      </Header>

      <Ribbon>
        <Clipboard />
        <FontGroup />
        <Alignment />
        <NumberGroup />
        <Styles />
        <Cells />
        <Editing />
        <AddIns />
        <Collapse>
          <Plain $w={18} $h={12} aria-label="طي الشريط">
            <svg width="13" height="8" viewBox="0 0 13 8" fill="none" stroke="#444" strokeWidth="1.500"><path d="M1 7l5.500-6L12 7" /></svg>
          </Plain>
        </Collapse>
      </Ribbon>

      <MessageBar role="status">
        <svg width="22" height="22" viewBox="0 0 22 22"><circle cx="11" cy="11" r="11" fill="#4a7ebb" /><path d="M9.500 9h3v9h-3zM9.500 4.500h3v3h-3z" fill="#fff" /></svg>
        <MessageTitle>تم الكشف عن إصدار جديد مثبت</MessageTitle>
        <MessageText>يتضمن الإصدار الجديد المثبت من <Latin>Microsoft Office Professional Plus 2016</Latin> ميزات أحدث من الإصدار الحالي. هل تريد تنشيط الإصدار المثبت الجديد؟</MessageText>
        <MessageButton $w={64}>نعم</MessageButton>
        <MessageButton $w={90}>لا شكراً</MessageButton>
        <MessageClose $w={20} $h={20} aria-label="إغلاق الرسالة">
          <svg width="12" height="12" viewBox="0 0 12 12" stroke="#444" strokeWidth="1.500"><path d="M1 1l10 10M11 1 1 11" /></svg>
        </MessageClose>
      </MessageBar>

      <SheetArea>
        <Grid><Sheet /></Grid>
        <VScroll>
          <ScrollButton aria-label="لأعلى"><Tri d="up" /></ScrollButton>
          <VTrack><VThumb /></VTrack>
          <ScrollButton aria-label="لأسفل"><Tri /></ScrollButton>
        </VScroll>
      </SheetArea>

      <SheetBar>
        <Plain $w={30} $h={20} aria-label="السابق"><Tri d="right" c="#b5b5b5" s={10} /></Plain>
        <Plain $w={30} $h={20} aria-label="التالي"><Tri d="left" c="#b5b5b5" s={10} /></Plain>
        <SheetTab>ورقة1</SheetTab>
        <Plain $w={20} $h={20} aria-label="ورقة جديدة">
          <svg width="20" height="20" viewBox="0 0 20 20" fill="none" stroke="#777"><circle cx="10" cy="10" r="9" /><path d="M10 5v10M5 10h10" strokeWidth="1.500" /></svg>
        </Plain>
        <HScroll>
          <Dots><i /><i /><i /></Dots>
          <ScrollButton aria-label="يمين"><Tri d="right" /></ScrollButton>
          <HTrack><HThumb /></HTrack>
          <ScrollButton aria-label="يسار"><Tri d="left" /></ScrollButton>
        </HScroll>
      </SheetBar>

      <Status>
        <span>جاهز</span>
        <Access>
          <svg width="19" height="18" viewBox="0 0 19 18" fill="none" stroke="#333" strokeWidth="1.300"><path d="M4 1C0 5 0 11 4 15M8 0v7M6 3h5M13 2v6M10 5h7M8 9l9 8M16 9l-7 8" /></svg>
          إمكانية الوصول لذوي الاحتياجات الخاصة: اطلع على توصيات
        </Access>
        <Views>
          <View $on aria-label="عادي">
            <svg width="17" height="17" viewBox="0 0 17 17" fill="none" stroke="#555"><path d="M.5.5h16v15H.5zM.5 5.500h16M.5 10.500h16M5.500.5v15M11.500.5v15" /></svg>
          </View>
          <View aria-label="تخطيط الصفحة">
            <svg width="17" height="16" viewBox="0 0 17 16" fill="none" stroke="#555"><path d="M.5.5h16v15H.5zM4.500 2.500h8v11h-8zM6 5.500h5M6 8h5M6 10.500h5" /></svg>
          </View>
          <View aria-label="فواصل الصفحات">
            <svg width="17" height="16" viewBox="0 0 17 16" fill="none" stroke="#555"><path d="M.5.5h16v15H.5zM.5 9.500h10v-9M5.500.5v9" /></svg>
          </View>
        </Views>
        <Plain $w={16} $h={20} aria-label="تصغير العرض"><svg width="10" height="10" viewBox="0 0 10 10" stroke="#333"><path d="M0 4.500h10" /></svg></Plain>
        <Zoom type="range" aria-label="التكبير" min="0" max="100" defaultValue="50" />
        <Plain $w={16} $h={20} aria-label="تكبير العرض"><svg width="10" height="10" viewBox="0 0 10 10" stroke="#333"><path d="M0 4.500h10M4.500 0v10" /></svg></Plain>
        <Percent>100%</Percent>
      </Status>

      <Watermark>
        <MarkName>مستقل</MarkName>
        <MarkSite>mostaql.com</MarkSite>
      </Watermark>
    </Window>
  );
}
